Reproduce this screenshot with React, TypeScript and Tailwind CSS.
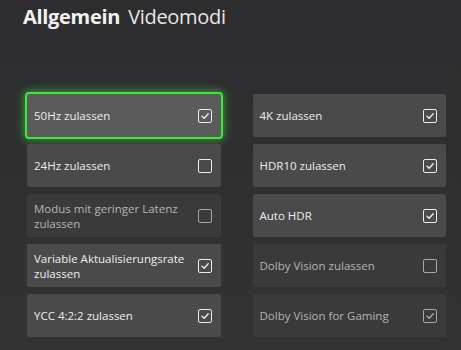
import React from "react";

interface Option {
  label: string;
  checked: boolean;
  disabled?: boolean;
  focused?: boolean;
}

const leftOptions: Option[] = [
  { label: "50Hz zulassen", checked: true, focused: true },
  { label: "24Hz zulassen", checked: false },
  { label: "Modus mit geringer Latenz zulassen", checked: false, disabled: true },
  { label: "Variable Aktualisierungsrate zulassen", checked: true },
  { label: "YCC 4:2:2 zulassen", checked: true },
];

const rightOptions: Option[] = [
  { label: "4K zulassen", checked: true },
  { label: "HDR10 zulassen", checked: true },
  { label: "Auto HDR", checked: true },
  { label: "Dolby Vision zulassen", checked: false, disabled: true },
  { label: "Dolby Vision for Gaming", checked: true, disabled: true },
];

function Checkbox({ checked, disabled }: { checked: boolean; disabled?: boolean }) {
  return (
    <div
      className={
        "w-[14px] h-[14px] shrink-0 rounded-[2px] border-[1.5px] flex items-center justify-center " +
        (disabled ? "border-[#a8a8a8]" : "border-[#ececec]")
      }
    >
      {checked && (
        <svg width="10" height="10" viewBox="0 0 10 10" fill="none">
          <path
            d="M2 5.2 L4.2 7.2 L8.2 2.8"
            stroke={disabled ? "#a8a8a8" : "#ececec"}
            strokeWidth="1.4"
            strokeLinecap="round"
            strokeLinejoin="round"
          />
        </svg>
      )}
    </div>
  );
}

function Tile({ option }: { option: Option }) {
  const bg = option.focused
    ? "bg-[#5b5b5c] ring-2 ring-[#3fe640] shadow-[0_0_9px_3px_rgba(60,230,60,0.6)]"
    : option.disabled
    ? "bg-[#3a3a3b]"
    : "bg-[#4a4a4b]";
  const text = option.disabled ? "text-[#b4b4b4]" : "text-[#ededed] font-medium";
  return (
    <div
      className={`h-[43px] rounded-[2px] flex items-center justify-between pl-[7px] pr-[9px] ${bg}`}
    >
      <span className={`text-[11.5px] leading-[15px] pr-3 ${text}`}>{option.label}</span>
      <Checkbox checked={option.checked} disabled={option.disabled} />
    </div>
  );
}

export default function App() {
  return (
    <div
      className="w-[461px] h-[350px] overflow-hidden bg-gradient-to-b from-[#2d2d2f] to-[#323233]"
      style={{ fontFamily: '"Open Sans", "Noto Sans", sans-serif' }}
    >
      <div className="pl-[23px] pt-[2px] flex items-baseline gap-[8px] text-[#f2f2f2]">
        <span className="text-[20px] font-bold tracking-[-0.3px]">Allgemein</span>
        <span className="text-[20px] font-normal tracking-[-0.3px] text-[#e6e6e6]">Videomodi</span>
      </div>
      <div className="mt-[62px] ml-[27px] w-[419px] grid grid-cols-2 gap-x-[32px]">
        <div className="flex flex-col gap-[7px]">
          {leftOptions.map((o) => (
            <Tile key={o.label} option={o} />
          ))}
        </div>
        <div className="flex flex-col gap-[7px]">
          {rightOptions.map((o) => (
            <Tile key={o.label} option={o} />
          ))}
        </div>
      </div>
    </div>
  );
}
